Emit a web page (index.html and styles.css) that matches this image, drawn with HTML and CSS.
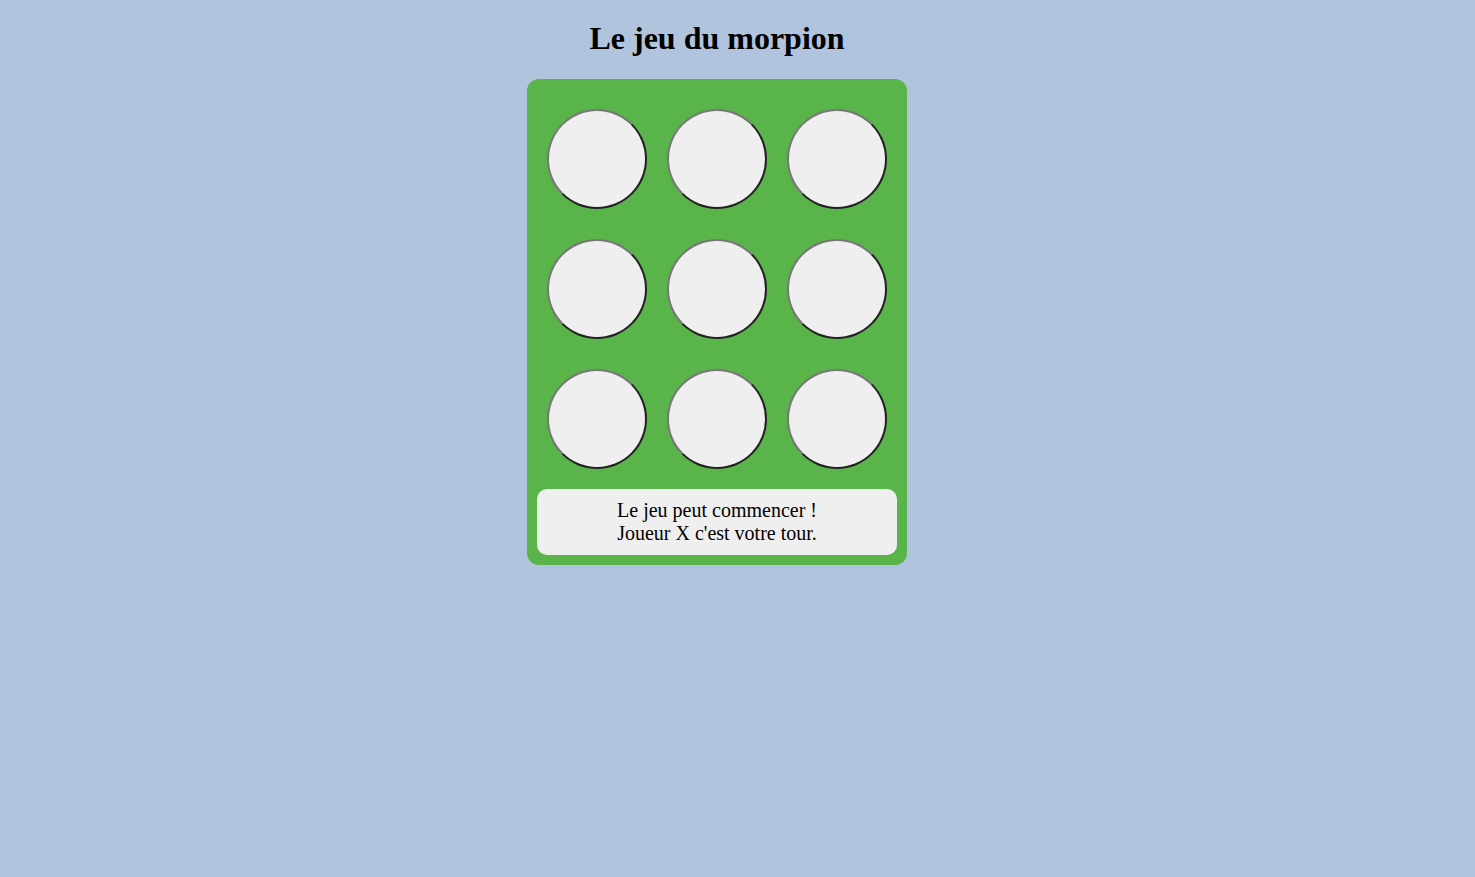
FILE: index.html
```html
<!DOCTYPE html>
<html lang="fr">
<head>
<meta charset="utf-8">
<title>Morpion</title>
<link rel="stylesheet" href="styles.css">
</head>
<body>
<h1 class="title">Le jeu du morpion</h1>
<div class="board">
  <div class="grid">
    <button class="cell"></button>
    <button class="cell"></button>
    <button class="cell"></button>
    <button class="cell"></button>
    <button class="cell"></button>
    <button class="cell"></button>
    <button class="cell"></button>
    <button class="cell"></button>
    <button class="cell"></button>
  </div>
  <div class="message">Le jeu peut commencer !<br>Joueur X c'est votre tour.</div>
</div>
</body>
</html>
```
FILE: styles.css
```css
html {
  background: #b0c4de;
}
body {
  margin: 0 8px 8px;
  padding-right: 41px;
  font-family: "Liberation Serif", "Times New Roman", serif;
  color: #000;
}
.title {
  text-align: center;
  font-size: 32px;
  font-weight: bold;
  margin: 0;
  padding: 20px 0 22px;
  line-height: 37px;
}
.board {
  width: 380px;
  box-sizing: border-box;
  margin: 0 auto;
  background: #59b449;
  border-radius: 12px;
  padding: 30px 10px 10px;
}
.grid {
  display: grid;
  grid-template-columns: repeat(3, 100px);
  column-gap: 20px;
  row-gap: 30px;
  justify-content: center;
}
.cell {
  width: 100px;
  height: 100px;
  border-radius: 50%;
  background: #efefef;
  border: 2px solid;
  border-color: #777 #222 #222 #777;
  padding: 0;
  margin: 0;
  box-sizing: border-box;
}
.message {
  margin-top: 20px;
  background: #efefef;
  border-radius: 10px;
  padding: 10px;
  text-align: center;
  font-size: 20px;
  line-height: 23px;
}
```
